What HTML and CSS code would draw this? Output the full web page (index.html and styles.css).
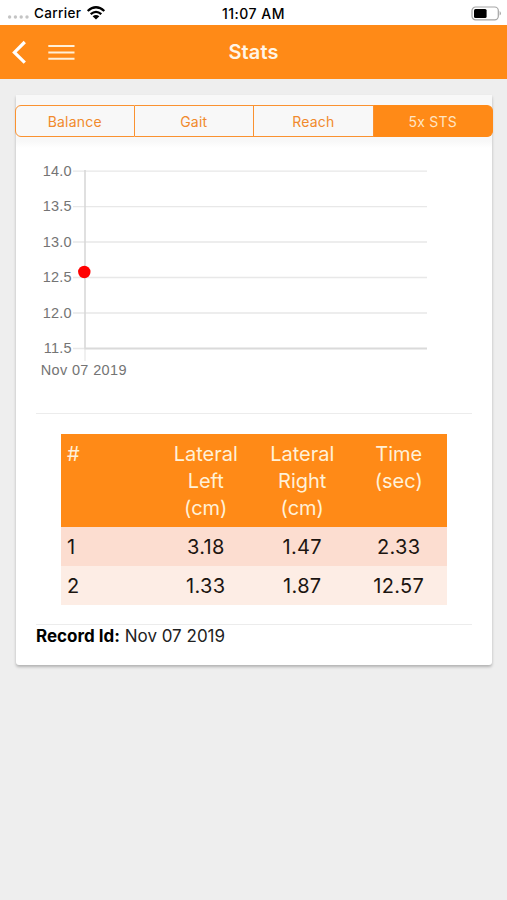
FILE: index.html
```html
<!DOCTYPE html>
<html lang="en">
<head>
<meta charset="utf-8">
<title>Stats</title>
<link rel="stylesheet" href="styles.css">
</head>
<body>
<div class="status">
  <div class="status-left">
    <svg width="24" height="6" viewBox="0 0 24 6" fill="#c4c4c4"><circle cx="3.6" cy="3" r="1.7"/><circle cx="9.4" cy="3" r="1.7"/><circle cx="15.2" cy="3" r="1.7"/><circle cx="21" cy="3" r="1.7"/></svg>
    <span class="carrier">Carrier</span>
    <svg class="wifi" width="20" height="14" viewBox="0 0 20 14" fill="none" stroke="#000" stroke-width="2.3"><path d="M1.7 5Q10-2.4 18.3 5M4.7 8.2Q10 3.6 15.3 8.2"/><path d="M10 13.6L6.6 10.2Q10 7.8 13.4 10.2Z" fill="#000" stroke="none"/></svg>
  </div>
  <span class="clock">11:07 AM</span>
  <svg class="battery" width="30" height="15" viewBox="0 0 30 15"><rect x="1" y="1" width="26.3" height="12.8" rx="3.6" fill="#fff" stroke="#a5a5a5" stroke-width="1.2"/><rect x="3" y="3" width="12.6" height="9" rx="1.5"/><path d="M28.6 5v4.6q1.3-.7 1.3-2.3t-1.3-2.3z" fill="#a5a5a5"/></svg>
</div>
<header class="navbar">
  <div class="nav-icons">
    <svg width="16" height="24" viewBox="0 0 16 24" fill="none" stroke="#fff" stroke-width="3.2"><path d="M12.8 2L2.4 12.4l10.4 10.2"/></svg>
    <svg width="27" height="17" viewBox="0 0 27 17" fill="none" stroke="#fff0d8" stroke-width="2"><path d="M.3 2H26.5M.3 8.4H26.5M.3 14.8H26.5"/></svg>
  </div>
  <h1 class="title">Stats</h1>
</header>
<main class="card">
  <nav class="segments">
    <div class="tabs">
      <span class="tab">Balance</span><span class="tab">Gait</span><span class="tab">Reach</span><span class="tab active">5x STS</span>
    </div>
  </nav>
  <svg class="chart" width="476" height="265" viewBox="16 148 476 265">
    <g fill="none" stroke="#e8e8e8" stroke-width="1.3">
      <path d="M73 171.2H427M73 206.6H427M73 242H427M73 277.5H427M73 313H427M73 348.5H84M85 348V361"/>
      <path d="M85 170V348.5" stroke="#d6d6d6" stroke-width="1.5"/>
      <path d="M84.3 348.5H427" stroke="#dadada" stroke-width="2"/>
    </g>
    <g class="axis" text-anchor="end">
      <text x="71.8" y="175.9">14.0</text><text x="71.8" y="211.3">13.5</text><text x="71.8" y="246.7">13.0</text><text x="71.8" y="282.2">12.5</text><text x="71.8" y="317.7">12.0</text><text x="71.8" y="353.1">11.5</text>
    </g>
    <text class="axis date" x="40.7" y="374.9">Nov 07 2019</text>
    <circle cx="84.3" cy="272" r="6.2" fill="#f00"/>
  </svg>
  <hr class="rule">
  <table class="results">
    <thead><tr><th>#</th><th>Lateral<br>Left<br>(cm)</th><th>Lateral<br>Right<br>(cm)</th><th>Time<br>(sec)</th></tr></thead>
    <tbody>
      <tr><td>1</td><td>3.18</td><td>1.47</td><td>2.33</td></tr>
      <tr><td>2</td><td>1.33</td><td>1.87</td><td>12.57</td></tr>
    </tbody>
  </table>
  <hr class="rule">
  <p class="record"><b>Record Id:</b> Nov 07 2019</p>
</main>
</body>
</html>
```
FILE: styles.css
```css
* { box-sizing: border-box; }
body { margin: 0; min-height: 900px; background: #eee; font-family: Inter, "Liberation Sans", sans-serif; color: #000; }
svg { display: block; }
.status { height: 25px; background: #fff; display: grid; grid-template-columns: 1fr auto 1fr; align-items: center; padding: 0 6px; font-size: 13.5px; font-weight: 500; line-height: 25px; }
.status-left { display: flex; align-items: center; }
.status-left > svg:first-child { margin-top: 8px; }
.carrier { margin-left: 4px; padding-top: 1px; letter-spacing: .35px; }
.wifi { margin-left: 5px; }
.clock { font-size: 14px; letter-spacing: .5px; }
.battery { justify-self: end; }
.navbar { height: 54px; background: #ff8a17; display: grid; grid-template-columns: 1fr auto 1fr; align-items: center; padding: 0 12px; }
.nav-icons { display: flex; align-items: center; gap: 20px; }
.title { margin: 0; color: #fff5e6; font-size: 20px; font-weight: 600; line-height: 26px; letter-spacing: .1px; }
.card { margin: 16px 15px 0 16px; height: 570px; background: #fff; border-radius: 0 0 3px 3px; box-shadow: 0 2px 3px rgba(0, 0, 0, .25); }
.segments { height: 53px; padding-top: 10px; background: linear-gradient(#f8f8f8 46px, #fff); }
.tabs { height: 32px; margin: 0 -1px; display: grid; grid-template-columns: repeat(4, 1fr); }
.tab { display: flex; align-items: center; justify-content: center; color: #f18a2c; font-size: 14px; letter-spacing: .2px; padding-top: 1px; border: 1px solid #fa9230; border-left-width: 0; }
.tab:first-child { border-left-width: 1px; border-radius: 6px 0 0 6px; }
.tab:last-child { border-radius: 0 6px 6px 0; }
.tab.active { background: #ff8a17; border-color: #ff8a17; color: #ffe5c4; }
.axis { font: 14.5px "Liberation Sans", sans-serif; fill: #747474; letter-spacing: .2px; }
.date { letter-spacing: .36px; }
.rule { border: 0; height: 1px; background: #ececec; margin: 0 20px; }
.results { width: 386px; margin: 20px 0 19px 45px; table-layout: fixed; border-collapse: collapse; font-size: 20px; line-height: 27px; }
.results th { height: 93px; padding: 6.5px 0 5px; vertical-align: top; font-weight: 400; background: #ff8a17; color: #fff1d8; }
.results td { height: 39px; padding: 1px 0 0; text-align: center; color: #1c1511; letter-spacing: .3px; }
.results th:first-child, .results td:first-child { text-align: left; padding-left: 6px; }
.results tbody tr { background: #fcddd0; }
.results tbody tr:last-child { background: #fdede5; }
.record { margin: 0 20px; font-size: 17px; line-height: 22px; color: #222; }
.record b { color: #000; }
```
